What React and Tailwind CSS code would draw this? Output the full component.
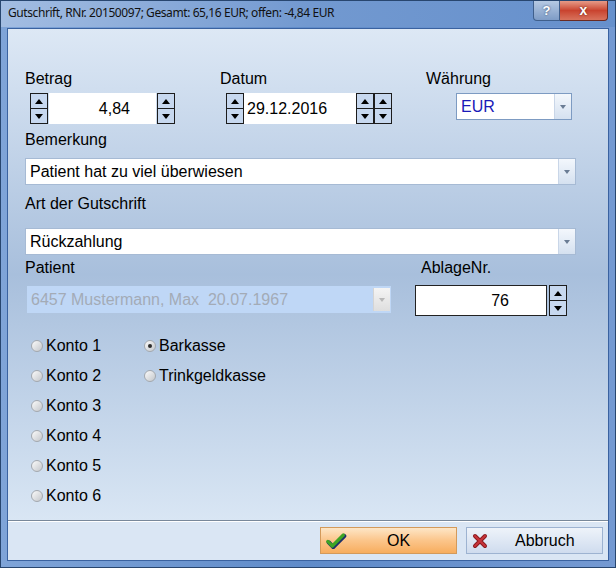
import React from "react";

const font = "font-['Liberation_Sans',Arial,sans-serif]";

function Tri({ up, className = "fill-black" }) {
  return (
    <svg width="8" height="5" viewBox="0 0 8 5" className={className}>
      {up ? <polygon points="0,5 8,5 4,0" /> : <polygon points="0,0 8,0 4,5" />}
    </svg>
  );
}

function Spin({ h = "h-[31px]" }) {
  return (
    <div className={`flex w-[18px] flex-col border border-[#1c1c1c] bg-[#c7d8ef] ${h}`}>
      <div className="flex flex-1 items-center justify-center border-b border-[#1c1c1c]">
        <Tri up />
      </div>
      <div className="flex flex-1 items-center justify-center">
        <Tri />
      </div>
    </div>
  );
}

function Arrow({ disabled }) {
  return (
    <div
      className={`flex w-[17px] items-center justify-center border-l ${
        disabled
          ? "border-[#d4d4d4] bg-gradient-to-b from-[#f4f4f4] to-[#dedede]"
          : "border-[#c9d6e8] bg-gradient-to-b from-[#f3f7fc] to-[#d5e1f0]"
      }`}
    >
      <svg width="6" height="4" viewBox="0 0 6 4" className={disabled ? "fill-[#b8b8b8]" : "fill-[#6a7c94]"}>
        <polygon points="0,0 6,0 3,4" />
      </svg>
    </div>
  );
}

function Combo({ text, w, textClass = "text-black" }) {
  return (
    <div className={`flex h-[27px] border border-[#a6bad4] bg-white ${w}`}>
      <div className={`flex flex-1 items-center pl-[4px] text-[16px] ${textClass}`}>{text}</div>
      <Arrow />
    </div>
  );
}

function Radio({ label, checked }) {
  return (
    <div className="flex h-[30px] items-center">
      <div className="flex h-[12px] w-[12px] items-center justify-center rounded-full border border-[#a3a8ae] bg-gradient-to-br from-[#fbfbfb] to-[#c4c7cb]">
        {checked && <div className="h-[4px] w-[4px] rounded-full bg-[#2c2c2c]" />}
      </div>
      <span className="ml-[3px] text-[16px] text-black">{label}</span>
    </div>
  );
}

export default function App() {
  return (
    <div className={`flex h-[568px] w-[616px] flex-col border border-[#28466f] bg-gradient-to-r from-[#7fa4d8] via-[#5f8bc9] to-[#7499d2] ${font}`}>
      {/* title bar */}
      <div className="flex h-[26px] items-start bg-gradient-to-r from-[#a3bde2] via-[#7299d0] to-[#6690cc]">
        <div className="pl-[7px] pt-[4px] font-['Noto_Sans',sans-serif] text-[12px] leading-[16px] tracking-[-0.42px] text-[#111]">
          Gutschrift, RNr. 20150097; Gesamt: 65,16 EUR; offen: -4,84 EUR
        </div>
        <div className="ml-auto mr-[7px] flex h-[20px]">
          <div className="flex w-[27px] items-center justify-center rounded-bl-[4px] border border-t-0 border-[#3f5f8c] bg-gradient-to-b from-[#b6c9e3] to-[#7e9cc6] text-[13px] font-bold text-white [text-shadow:0_0_2px_#2a3f60]">
            ?
          </div>
          <div className="flex w-[48px] items-center justify-center rounded-br-[4px] border border-l-0 border-t-0 border-[#6a2a22] bg-gradient-to-b from-[#e59a88] via-[#c9432f] to-[#d8725c] text-[14px] font-bold text-white [text-shadow:0_0_2px_#5a1a10]">
            x
          </div>
        </div>
      </div>

      {/* client */}
      <div className="mx-[6px] mb-[6px] mt-[1px] flex flex-1 flex-col border border-[#3a62a0]">
        <div className="flex flex-1 flex-col bg-gradient-to-b from-[#dde8f5] via-[#a8bfdc] to-[#d9e6f4] pl-[17px] text-black">
          {/* labels row 1 */}
          <div className="mt-[41px] flex h-[18px] items-center text-[16px]">
            <span className="w-[195px]">Betrag</span>
            <span className="w-[206px]">Datum</span>
            <span>Währung</span>
          </div>
          {/* controls row */}
          <div className="mt-[5px] flex h-[31px] items-start">
            <div className="ml-[5px] flex gap-[1px]">
              <Spin />
              <div className="flex h-[31px] w-[107px] items-center justify-end bg-white pr-[26px] text-[16px]">4,84</div>
              <Spin />
            </div>
            <div className="ml-[51px] flex">
              <Spin />
              <div className="flex h-[31px] w-[112px] items-center bg-white pl-[3px] text-[16px]">29.12.2016</div>
              <Spin />
              <Spin />
            </div>
            <div className="ml-[64px]">
              <div className="flex h-[27px] w-[116px] border border-[#7d9bc2] bg-white">
                <div className="flex flex-1 items-center pl-[4px] text-[16px] text-[#1a1ab8]">EUR</div>
                <Arrow />
              </div>
            </div>
          </div>
          {/* Bemerkung */}
          <div className="mt-[7px] flex h-[18px] items-center text-[16px]">Bemerkung</div>
          <div className="mt-[9px]">
            <Combo text="Patient hat zu viel überwiesen" w="w-[551px]" />
          </div>
          {/* Art */}
          <div className="mt-[10px] flex h-[18px] items-center text-[16px]">Art der Gutschrift</div>
          <div className="mt-[15px]">
            <Combo text="Rückzahlung" w="w-[551px]" />
          </div>
          {/* Patient / Ablage */}
          <div className="mt-[4px] flex h-[18px] items-center text-[16px]">
            <span className="w-[396px]">Patient</span>
            <span>AblageNr.</span>
          </div>
          <div className="mt-[8px] flex h-[30px] items-start">
            <div className="ml-[2px] mt-[1px] flex h-[27px] w-[364px] bg-[#bfd7f6]">
              <div className="flex flex-1 items-center pl-[4px] text-[16px] text-[#a3abb6]">
                6457 Mustermann, Max&nbsp;&nbsp;20.07.1967
              </div>
              <div className="my-[2px] mr-[1px] flex">
                <Arrow disabled />
              </div>
            </div>
            <div className="ml-[24px] flex h-[31px] w-[132px] items-center justify-end border border-[#222] bg-white pr-[37px] text-[16px]">
              76
            </div>
            <div className="ml-[2px]">
              <Spin />
            </div>
          </div>
          {/* radios */}
          <div className="ml-[6px] mt-[16px] flex">
            <div className="flex w-[113px] flex-col">
              <Radio label="Konto 1" />
              <Radio label="Konto 2" />
              <Radio label="Konto 3" />
              <Radio label="Konto 4" />
              <Radio label="Konto 5" />
              <Radio label="Konto 6" />
            </div>
            <div className="flex flex-col">
              <Radio label="Barkasse" checked />
              <Radio label="Trinkgeldkasse" />
            </div>
          </div>
          <div className="flex-1" />
        </div>
        {/* button bar */}
        <div className="h-[40px] border-t border-[#78889a] bg-[#dae6f4] shadow-[inset_0_1px_0_#ffffff]">
          <div className="flex justify-end gap-[9px] pr-[5px] pt-[6px]">
            <div className="flex h-[27px] w-[137px] items-center border border-[#d39a5b] bg-gradient-to-b from-[#fde6c6] via-[#fbc58a] to-[#f7ad5d] text-[16px]">
              <svg width="22" height="17" viewBox="0 0 24 18" className="ml-[4px]">
                <path d="M3 10 L8 15 L20 3" fill="none" stroke="#1d2e6a" strokeWidth="4.5" strokeLinecap="round" strokeLinejoin="round" transform="translate(1,1)" />
                <path d="M3 10 L8 15 L20 3" fill="none" stroke="#3ea424" strokeWidth="3.5" strokeLinecap="round" strokeLinejoin="round" />
              </svg>
              <span className="ml-[40px]">OK</span>
            </div>
            <div className="flex h-[27px] w-[137px] items-center border border-[#9db3d1] bg-gradient-to-b from-[#eef3fa] to-[#cfdcee] text-[16px]">
              <svg width="16" height="16" viewBox="0 0 16 16" className="ml-[5px]">
                <path d="M3 3 L13 13 M13 3 L3 13" stroke="#8a1a1e" strokeWidth="4" strokeLinecap="round" />
                <path d="M3 3 L13 13 M13 3 L3 13" stroke="#c8343a" strokeWidth="2" strokeLinecap="round" />
              </svg>
              <span className="ml-[27px]">Abbruch</span>
            </div>
          </div>
        </div>
      </div>
    </div>
  );
}
